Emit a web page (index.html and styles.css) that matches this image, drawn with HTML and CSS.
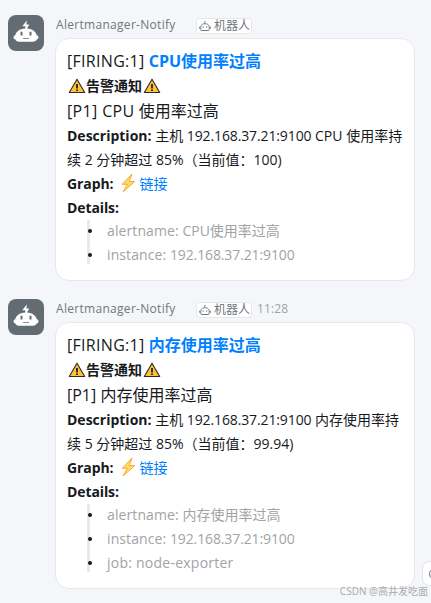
FILE: index.html
```
<!DOCTYPE html>
<html lang="zh-CN">
<head>
	<meta charset="UTF-8">
	<meta name="viewport" content="width=device-width, initial-scale=1.0">
	<title>Alertmanager-Notify</title>
	<link rel="stylesheet" href="styles.css">
</head>
<body>

	<!-- Общие иконки -->
	<svg class="sprite" width="0" height="0">
		<symbol id="robot" viewBox="0 0 36 36">
			<path d="M18.800 5.500 14.300 11.300h3v2.200C11.500 13.600 8 17 7.300 20.300c-2.300.4-2.500 3.900.2 4.300.4 1.500 1.600 2.100 3.500 2.100h14c2 0 3.200-.6 3.600-2.100 2.600-.4 2.500-3.900.1-4.300C28 17 24.500 13.700 19 13.500l2.300-3.900h-2.900z" fill="#fff"/>
			<path d="M13.500 16.800v3.700M22.500 16.800v3.700" stroke="#646c73" stroke-width="2"/>
			<path d="M15 23.500h6" stroke="#8b9197" stroke-width="1"/>
		</symbol>
		<symbol id="robot-small" viewBox="0 0 12 12">
			<path d="M6.500 1 5.500 2.300 6 3.500M1.800 6.500C2.300 4.500 4 3.700 6 3.700s3.700.8 4.200 2.800v3.300q0 .7-.7.700h-7q-.7 0-.7-.7zM.6 6.700v2M11.400 6.700v2M4.200 6.300v1.500M7.800 6.300v1.500" fill="none" stroke="#727a82" stroke-width="1"/>
		</symbol>
		<symbol id="warning" viewBox="0 0 18 16">
			<path d="M9 1.200 16.700 14.500H1.300z" fill="#ffc135" stroke="#2b2b2b" stroke-width="1.100" stroke-linejoin="round"/>
			<path d="M9 6v4.600M9 11.500v1.500" stroke="#222" stroke-width="1.800"/>
		</symbol>
		<symbol id="bolt" viewBox="0 0 16 20">
			<path d="M12 1 2.200 11.300h5.200L3 19 14.800 8.500H9.300z" fill="#ffd968" stroke="#f5a42c" stroke-width=".9" stroke-linejoin="round"/>
		</symbol>
	</svg>

	<div class="chat">
		<!-- CPU -->
		<div class="message">
			<div class="avatar"><svg width="36" height="36"><use href="#robot"/></svg></div>
			<div class="content">
				<div class="meta">
					<span class="name">Alertmanager-Notify</span>
					<span class="tag"><svg width="12" height="12"><use href="#robot-small"/></svg>机器人</span>
				</div>
				<div class="card">
					<div class="title"><span class="firing">[FIRING:1]</span> <a href="#">CPU使用率过高</a></div>
					<div class="notice"><svg width="18" height="16"><use href="#warning"/></svg>告警通知<svg width="18" height="16"><use href="#warning"/></svg></div>
					<div class="level"><span class="prio">[P1] CPU</span> 使用率过高</div>
					<div class="line"><b>Description:</b> 主机 <span class="ip">192.168.37.21:9100</span> CPU 使用率持</div>
					<div class="line">续 2 分钟超过 85%（当前值：100)</div>
					<div class="graph"><b>Graph:</b><svg width="16" height="20"><use href="#bolt"/></svg><a href="#">链接</a></div>
					<div class="details"><b>Details:</b></div>
					<ul>
						<li><span class="key">alertname:</span> CPU使用率过高</li>
						<li><span class="key">instance:</span> <span class="ip">192.168.37.21:9100</span></li>
					</ul>
				</div>
			</div>
		</div>

		<!-- Память -->
		<div class="message">
			<div class="avatar"><svg width="36" height="36"><use href="#robot"/></svg></div>
			<div class="content">
				<div class="meta">
					<span class="name">Alertmanager-Notify</span>
					<span class="tag"><svg width="12" height="12"><use href="#robot-small"/></svg>机器人</span>
					<span class="time">11:28</span>
				</div>
				<div class="card">
					<div class="title"><span class="firing">[FIRING:1]</span> <a href="#">内存使用率过高</a></div>
					<div class="notice"><svg width="18" height="16"><use href="#warning"/></svg>告警通知<svg width="18" height="16"><use href="#warning"/></svg></div>
					<div class="level">[P1] 内存使用率过高</div>
					<div class="line"><b>Description:</b> 主机 <span class="ip">192.168.37.21:9100</span> 内存使用率持</div>
					<div class="line">续 5 分钟超过 85%（当前值：99.94)</div>
					<div class="graph"><b>Graph:</b><svg width="16" height="20"><use href="#bolt"/></svg><a href="#">链接</a></div>
					<div class="details"><b>Details:</b></div>
					<ul>
						<li><span class="key">alertname:</span> 内存使用率过高</li>
						<li><span class="key">instance:</span> <span class="ip">192.168.37.21:9100</span></li>
						<li><span class="job">job: node-exporter</span></li>
					</ul>
				</div>
			</div>
		</div>

		<div class="reaction"><svg width="14" height="14" viewBox="0 0 14 14"><circle cx="7" cy="7" r="5.500" fill="none" stroke="#73787e"/></svg></div>
		<div class="watermark">CSDN @高井发吃面</div>
	</div>

</body>
</html>
```
FILE: styles.css
```
body {
	margin: 0;
	background-color: #f5f6fa;
	font-family: "Open Sans", "Noto Sans CJK SC", sans-serif;
	font-size: 14px;
	color: #171a1d;
	overflow: hidden;
}
a {
	color: #007fff;
	text-decoration: none;
}
.sprite {
	position: absolute;
}
.chat {
	position: relative;
	box-sizing: border-box;
	height: 603px;
	padding: 15px 16px 0 8px;
	overflow: hidden;
}
.message {
	display: flex;
	gap: 11px;
	margin-bottom: 18px;
}
.avatar {
	width: 36px;
	height: 36px;
	border-radius: 8px;
	background-color: #646c73;
}
.avatar svg {
	display: block;
}
.content {
	width: 361px;
}
.meta {
	display: flex;
	align-items: center;
	height: 23px;
	padding-left: 1px;
	box-sizing: border-box;
	font-size: 12px;
	line-height: 20px;
	color: #747677;
	white-space: nowrap;
}
.name {
	width: 140px;
	margin-top: -3px;
	letter-spacing: 0.3px;
}
.tag {
	display: flex;
	align-items: center;
	box-sizing: border-box;
	width: 56px;
	height: 16px;
	margin-top: -2px;
	padding-left: 2px;
	gap: 3px;
	background-color: #fff;
	border: 1px solid #e6e7ea;
	border-radius: 3px;
	line-height: 14px;
}
.time {
	margin: -3px 0 0 5px;
	color: #a2a3a5;
	letter-spacing: 0.1px;
}
.card {
	box-sizing: border-box;
	padding: 10px 12px 13px 11px;
	background-color: #fff;
	border: 1px solid #e6e8ec;
	border-radius: 14px;
	white-space: nowrap;
}
.title, .notice, .level {
	height: 25px;
	line-height: 25px;
}
.title, .level {
	font-size: 16px;
}
.title a {
	font-weight: bold;
}
.firing {
	letter-spacing: 0.3px;
}
.prio {
	letter-spacing: 0.35px;
}
.notice {
	display: flex;
	align-items: center;
	height: 24px;
	margin-bottom: 1px;
	line-height: 24px;
	font-weight: bold;
}
.notice svg {
	margin: 0 0 0 1px;
}
.line, li {
	height: 24px;
	line-height: 24px;
}
.ip {
	letter-spacing: -0.12px;
}
.graph, .details {
	display: flex;
	align-items: center;
	height: 24px;
	line-height: 24px;
}
.details {
	height: 23px;
	line-height: 22px;
}
.graph b, .details b {
	letter-spacing: -0.1px;
}
.graph svg {
	margin: -2px 3px 0 7px;
}
ul {
	position: relative;
	list-style: none;
	margin: 0;
	padding: 0 0 0 40px;
	color: #a2a3a5;
}
/* серая полоса цитаты за маркерами */
ul::before {
	content: "";
	position: absolute;
	left: 20px;
	top: 1px;
	bottom: 3px;
	width: 3px;
	background-color: #e9e9e9;
}
li {
	position: relative;
}
li::before {
	content: "";
	position: absolute;
	left: -19px;
	top: 10px;
	width: 4px;
	height: 4px;
	border-radius: 50%;
	background-color: #171a1d;
}
.key {
	letter-spacing: 0.1px;
}
.job {
	letter-spacing: 0.24px;
}
.reaction {
	position: absolute;
	left: 422px;
	top: 561px;
	width: 24px;
	height: 25px;
	box-sizing: border-box;
	padding: 5px;
	background-color: #fff;
	border: 1px solid #e0e2e5;
	border-radius: 7px;
}
.reaction svg {
	display: block;
}
.watermark {
	position: absolute;
	right: 3px;
	top: 583px;
	font-size: 10px;
	line-height: 16px;
	color: #a9abae;
	white-space: nowrap;
}
```
